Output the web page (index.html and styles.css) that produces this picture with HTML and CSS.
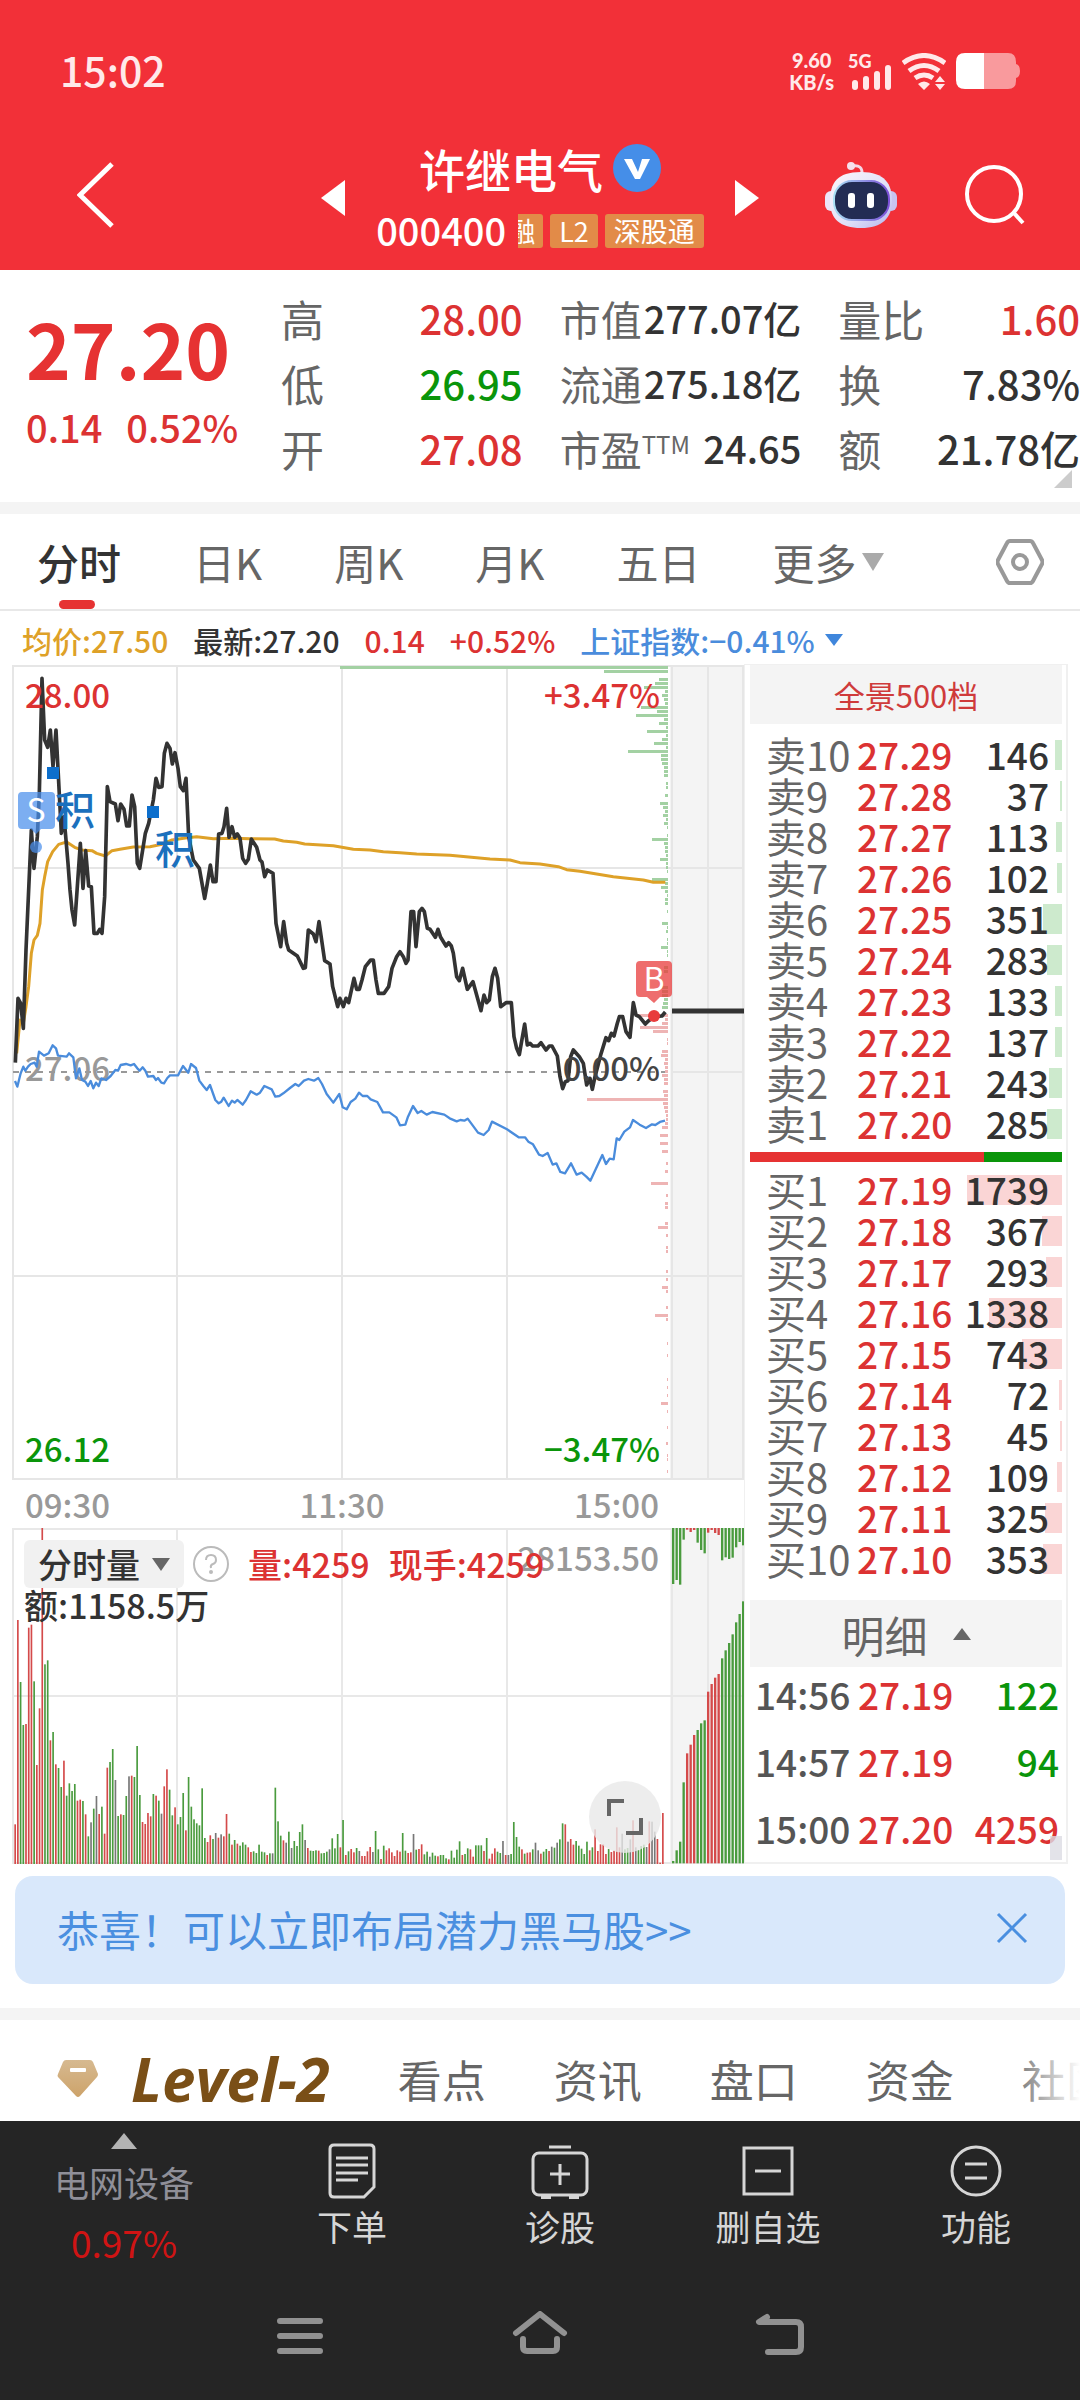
FILE: index.html
```html
<!DOCTYPE html>
<html lang="zh-CN">
<head>
<meta charset="utf-8">
<meta name="viewport" content="width=device-width, initial-scale=1">
<title>许继电气 000400</title>
<link rel="stylesheet" href="styles.css">
</head>
<body>
<header class="header">
  <div class="status">
    <time class="clock">15:02</time>
    <div class="status-icons">
      <span class="speed">9.60<br>KB/s</span>
      <span class="signal"><span class="net">5G</span>
        <svg width="40" height="25" viewBox="0 0 40 25" fill="#ffe9ea"><rect x="0" y="15" width="6" height="10" rx="3"/><rect x="11" y="11" width="6" height="14" rx="3"/><rect x="22" y="6" width="6" height="19" rx="3"/><rect x="33" y="0" width="6" height="25" rx="3"/></svg>
      </span>
      <svg width="44" height="37" viewBox="0 0 44 37"><g fill="none" stroke="#ffe9ea" stroke-width="5"><path d="M1 10Q22-5 43 10"/><path d="M7 18Q22 7 37 18"/><path d="M13 25Q22 19 31 25"/></g><path fill="#ffe9ea" d="M16 31Q22 26 28 31L22 37ZM38 23l5 6H33ZM33 31h10l-5 6Z"/></svg>
      <svg width="64" height="37" viewBox="0 0 64 37"><path fill="#f99a9d" d="M28 0H52Q60 0 60 9V11Q64 12 64 18T60 25V28Q60 36 52 36H28Z"/><path fill="#fff" d="M28 0H9Q0 0 0 9V27Q0 36 9 36H28Z"/></svg>
    </div>
  </div>
  <nav class="titlebar">
    <a class="back" href="#" aria-label="返回"><svg width="37" height="66" viewBox="0 0 37 66"><path d="M35 2L3 33L35 64" fill="none" stroke="#fff" stroke-width="5"/></svg></a>
    <div class="switcher">
      <button class="step" aria-label="上一只"><svg width="24" height="36" viewBox="0 0 24 36"><path d="M24 0V36L0 18Z" fill="#fff"/></svg></button>
      <div class="stock">
        <h1 class="name">许继电气<svg width="48" height="48" viewBox="0 0 48 48"><circle cx="24" cy="24" r="24" fill="#458ee8"/><path d="M11 15H19L25 28L29 15H37L27 35H22Z" fill="#fff"/></svg></h1>
        <div class="code">000400<span class="tags"><i class="tag cut">融</i><i class="tag">L2</i><i class="tag">深股通</i></span></div>
      </div>
      <button class="step" aria-label="下一只"><svg width="24" height="36" viewBox="0 0 24 36"><path d="M0 0V36L24 18Z" fill="#fff"/></svg></button>
    </div>
    <div class="actions">
      <button aria-label="助手"><svg width="72" height="68" viewBox="0 0 72 68">
        <defs><linearGradient id="head" x1="0" y1="0" x2="1" y2="1"><stop offset="0" stop-color="#fdf6fb"/><stop offset=".6" stop-color="#dfe0f8"/><stop offset="1" stop-color="#b4b4ec"/></linearGradient><linearGradient id="rim"><stop offset="0" stop-color="#a9e0f4"/><stop offset="1" stop-color="#7b50d8"/></linearGradient></defs>
        <path d="M27 5Q38 3 37 14" fill="none" stroke="#f4d8e6" stroke-width="3"/><circle cx="26" cy="5" r="4" fill="#f6e0ec"/>
        <rect x="0" y="30" width="12" height="20" rx="6" fill="#ece4f8"/><rect x="60" y="30" width="12" height="20" rx="6" fill="#c8c4f0"/>
        <path d="M36 11C60 11 67 23 67 40S57 67 36 67S5 58 5 40S12 11 36 11Z" fill="url(#head)"/>
        <rect x="9" y="20" width="55" height="39" rx="18" fill="#232c54" stroke="url(#rim)" stroke-width="2"/>
        <rect x="23" y="32" width="7" height="15" rx="3" fill="#fff"/><rect x="42" y="32" width="7" height="15" rx="3" fill="#fff"/></svg></button>
      <button aria-label="搜索"><svg width="60" height="60" viewBox="0 0 60 60" fill="none" stroke="#fff" stroke-width="4"><circle cx="29" cy="29" r="27"/><path d="M48 47L58 58"/></svg></button>
    </div>
  </nav>
</header>

<main>
  <section class="quote">
    <div class="last">
      <strong class="price">27.20</strong>
      <div class="change"><span>0.14</span><span>0.52%</span></div>
    </div>
    <dl class="stats"><div><dt>高</dt><dd class="up">28.00</dd></div><div><dt>低</dt><dd class="down">26.95</dd></div><div><dt>开</dt><dd class="up">27.08</dd></div></dl>
    <dl class="stats mid"><div><dt>市值</dt><dd>277.07亿</dd></div><div><dt>流通</dt><dd>275.18亿</dd></div><div><dt>市盈<sup>TTM</sup></dt><dd>24.65</dd></div></dl>
    <dl class="stats"><div><dt>量比</dt><dd class="up">1.60</dd></div><div><dt>换</dt><dd>7.83%</dd></div><div><dt>额</dt><dd>21.78亿</dd></div></dl>
    <svg class="corner" width="18" height="18" viewBox="0 0 18 18"><path d="M18 0V18H0Z" fill="#ccc"/></svg>
  </section>

  <nav class="periods">
    <a class="active" href="#">分时</a><a href="#">日K</a><a href="#">周K</a><a href="#">月K</a><a href="#">五日</a>
    <a class="more" href="#">更多<svg width="22" height="18" viewBox="0 0 22 18"><path d="M0 0H22L11 18Z" fill="#aaa"/></svg></a>
    <button class="settings" aria-label="设置"><svg width="48" height="46" viewBox="0 0 48 46" fill="none" stroke="#999" stroke-width="4"><path d="M14 2H34Q36 2 37 4L46 21Q47 23 46 25L37 42Q36 44 34 44H14Q12 44 11 42L2 25Q1 23 2 21L11 4Q12 2 14 2Z"/><circle cx="24" cy="23" r="7"/></svg></button>
  </nav>

  <div class="info">
    <span class="avg">均价:27.50</span><span>最新:27.20</span><span class="up">0.14</span><span class="up">+0.52%</span>
    <a class="index" href="#">上证指数:−0.41%<svg width="18" height="12" viewBox="0 0 18 12"><path d="M0 0H18L9 12Z" fill="#3f86dc"/></svg></a>
  </div>

  <div class="market">
    <div class="charts">
      <svg class="plot" viewBox="0 660 744 822" role="img" aria-label="分时走势">
        <rect x="670" y="665" width="74" height="815" fill="#f4f4f4"/>
        <g stroke="#e6e6e6" stroke-width="2" fill="none"><path d="M13 666H744M13 868H744M672 1072H744M13 1276H744M13 1479H744M13 665V1480M177 665V1480M342 665V1480M507 665V1480M672 665V1480M708 665V1480M743 665V1480"/></g>
        <path d="M13 1072H668" stroke="#999" stroke-width="2" stroke-dasharray="6 6"/>
        <g id="depth"></g>
        <text class="t grey" x="25" y="1081">27.06</text>
        <g transform="translate(0 650) scale(.33333)" fill="none" stroke-linejoin="round">
          <polyline stroke="#dea128" stroke-width="9" points="50,1210 60,1110 70,1120 78,1070 86,1010 94,910 102,870 112,856 120,820 127,720 134,680 143,635 158,605 176,583 200,576 224,592 246,600 276,602 290,610 316,618 336,602 360,598 400,591 450,590 486,583 516,570 556,564 590,560 640,566 700,565 750,566 824,567 850,573 890,577 914,582 1000,587 1060,598 1110,600 1150,605 1200,608 1250,612 1350,616 1470,627 1530,630 1560,638 1620,642 1675,650 1700,659 1740,664 1840,680 1930,690 1960,697 1996,697"/>
          <polyline stroke="#4a8cdc" stroke-width="7" points="45,1293 52,1310 62,1270 70,1250 76,1262 84,1250 92,1242 104,1238 110,1250 117,1205 132,1217 146,1210 158,1186 168,1195 174,1217 200,1220 207,1210 220,1222 228,1285 238,1255 246,1290 256,1295 264,1308 272,1293 280,1315 288,1298 296,1308 304,1285 318,1290 332,1278 346,1260 354,1262 362,1245 378,1242 392,1246 402,1242 412,1255 419,1262 428,1252 436,1262 444,1280 460,1278 468,1290 474,1284 484,1298 492,1300 502,1284 510,1276 534,1276 549,1248 565,1268 573,1242 588,1254 598,1292 610,1308 620,1320 630,1305 646,1350 656,1360 664,1355 671,1343 686,1368 696,1352 704,1358 712,1350 728,1364 738,1350 752,1324 770,1334 780,1328 793,1308 815,1318 826,1340 838,1338 850,1330 870,1314 886,1302 896,1308 912,1292 925,1287 942,1292 955,1284 966,1302 980,1332 1000,1358 1018,1332 1028,1372 1040,1378 1052,1356 1066,1346 1077,1328 1088,1338 1102,1338 1112,1348 1132,1356 1149,1387 1168,1387 1189,1402 1200,1426 1216,1424 1224,1400 1239,1368 1253,1389 1264,1383 1280,1394 1297,1386 1333,1394 1349,1405 1370,1414 1381,1410 1393,1412 1403,1406 1418,1426 1434,1448 1451,1455 1466,1440 1476,1415 1521,1438 1556,1462 1575,1462 1585,1475 1599,1483 1617,1514 1628,1518 1643,1509 1658,1544 1669,1540 1681,1566 1695,1570 1713,1540 1730,1574 1745,1568 1759,1580 1771,1592 1786,1560 1807,1515 1818,1542 1829,1526 1841,1528 1850,1465 1858,1470 1873,1445 1890,1432 1899,1410 1919,1424 1938,1434 1956,1423 1966,1425 1980,1416 1995,1412"/>
          <polyline stroke="#333" stroke-width="11" points="46,1238 54,1045 62,1060 70,1135 78,900 94,540 102,655 112,560 118,430 126,85 134,270 143,292 151,240 159,350 168,240 184,550 192,500 204,640 210,720 216,780 224,825 241,580 249,715 257,602 266,708 274,710 282,850 292,850 299,838 306,850 314,740 322,410 330,455 346,462 354,512 362,462 372,478 380,528 388,528 396,435 404,470 412,640 419,655 428,600 436,550 446,520 460,450 468,385 476,412 486,410 493,310 501,280 510,295 517,342 525,308 534,355 541,410 550,422 558,385 566,560 580,630 598,655 614,745 622,700 631,645 639,695 648,695 656,552 666,550 672,530 680,475 687,562 696,530 704,562 712,552 720,565 728,625 737,640 745,628 754,567 770,592 780,630 786,636 794,680 802,660 819,670 828,820 842,890 851,815 860,880 866,900 892,918 910,955 916,953 925,840 940,852 948,875 957,815 974,932 990,942 998,1010 1013,1070 1020,1045 1030,1070 1038,1045 1046,1058 1062,985 1070,1018 1078,1018 1086,990 1096,950 1112,930 1120,930 1128,990 1135,1030 1152,1030 1166,1010 1176,955 1190,920 1200,905 1210,920 1218,940 1224,930 1233,785 1241,785 1248,890 1258,785 1266,775 1273,785 1282,835 1290,838 1306,862 1314,838 1322,862 1338,888 1346,878 1354,888 1360,910 1370,980 1378,992 1388,955 1402,1018 1419,995 1443,1082 1452,1035 1460,1058 1468,1050 1477,980 1485,955 1493,985 1502,1070 1518,1058 1534,1058 1542,1160 1550,1195 1558,1214 1574,1122 1582,1185 1590,1180 1598,1188 1614,1188 1623,1178 1638,1200 1648,1188 1656,1188 1672,1218 1680,1280 1688,1316 1696,1295 1704,1292 1712,1220 1720,1200 1738,1220 1750,1240 1760,1305 1770,1285 1777,1318 1785,1280 1802,1215 1818,1163 1826,1172 1834,1150 1842,1158 1852,1120 1858,1100 1868,1100 1878,1145 1890,1162 1900,1058 1908,1095 1918,1100 1936,1122 1946,1112 1962,1100 1986,1098 1996,1086"/>
        </g>
        <path d="M672 1011H744" stroke="#333" stroke-width="5"/>
        <rect x="47" y="767" width="12" height="12" fill="#0d6fcc"/><rect x="147" y="806" width="12" height="12" fill="#0d6fcc"/>
        <g fill="#4a8fec" fill-opacity=".72"><path d="M22 792H51Q55 792 55 796V825Q55 829 51 829H41L36 834L31 829H22Q18 829 18 825V796Q18 792 22 792Z"/><circle cx="36" cy="847" r="6"/></g>
        <g fill="#e83c3c"><path fill-opacity=".75" d="M640 961H668Q672 961 672 965V993Q672 997 668 997H660L654 1003L647 997H640Q636 997 636 993V965Q636 961 640 961Z"/><circle cx="654" cy="1016" r="6"/></g>
        <text class="mark" x="36" y="822">S</text><text class="mark" x="654" y="991">B</text>
        <text class="note" x="55" y="825">积</text><text class="note" x="155" y="864">积</text>
        <text class="t red" x="25" y="708">28.00</text><text class="t red end" x="660" y="708">+3.47%</text>
        <text class="t dark end" x="660" y="1081">0.00%</text>
        <text class="t green" x="25" y="1462">26.12</text><text class="t green end" x="660" y="1462">−3.47%</text>
      </svg>
      <div class="times"><span>09:30</span><span>11:30</span><span>15:00</span></div>
      <div class="volume">
        <svg class="plot" viewBox="0 1526 744 340" role="img" aria-label="成交量">
          <rect x="670" y="1528" width="74" height="336" fill="#f4f4f4"/>
          <path stroke="#e8e8e8" stroke-width="2" d="M13 1529H744M13 1696H744M13 1863H744M13 1528V1864M177 1528V1864M342 1528V1864M507 1528V1864M672 1528V1864M708 1528V1864M743 1528V1864"/>
          <g id="bars" transform="translate(0 1510) scale(.33333)"></g>
          <text class="t grey end" x="659" y="1571">28153.50</text>
        </svg>
        <div class="legend">
          <button class="indicator">分时量<svg width="18" height="13" viewBox="0 0 18 13"><path d="M0 0H18L9 13Z" fill="#666"/></svg></button>
          <svg width="36" height="36" viewBox="0 0 36 36"><circle cx="18" cy="18" r="17" fill="none" stroke="#bbb" stroke-width="2"/><path d="M13 14Q13 9 18 9T23 14Q23 17 20 18T18 22" fill="none" stroke="#bbb" stroke-width="2"/><circle cx="18" cy="26" r="2" fill="#bbb"/></svg>
          <span class="up">量:4259</span><span class="up">现手:4259</span>
          <span class="amount">额:1158.5万</span>
        </div>
        <button class="expand" aria-label="全屏"><svg width="38" height="38" viewBox="0 0 38 38" fill="none" stroke="#666" stroke-width="4"><path d="M3 18V3H18M35 20V35H20"/></svg></button>
      </div>
    </div>

    <aside class="side">
      <button class="depth-all">全景500档</button>
      <table class="book sell"><tbody id="sell"></tbody></table>
      <div class="ratio"><i></i></div>
      <table class="book buy"><tbody id="buy"></tbody></table>
      <button class="detail">明细<svg width="18" height="12" viewBox="0 0 18 12"><path d="M0 12H18L9 0Z" fill="#666"/></svg></button>
      <table class="ticks"><tbody>
        <tr><td>14:56</td><td class="up">27.19</td><td class="down">122</td></tr>
        <tr><td>14:57</td><td class="up">27.19</td><td class="down">94</td></tr>
        <tr><td>15:00</td><td class="up">27.20</td><td class="up">4259</td></tr>
      </tbody></table>
      <i class="thumb"></i>
    </aside>
  </div>

  <div class="banner">
    <a href="#">恭喜！可以立即布局潜力黑马股&gt;&gt;</a>
    <button aria-label="关闭"><svg width="32" height="32" viewBox="0 0 32 32"><path d="M2 2L30 30M30 2L2 30" stroke="#4a8fe0" stroke-width="3"/></svg></button>
  </div>

  <nav class="sections">
    <svg class="gem" width="42" height="40" viewBox="0 0 42 40"><defs><linearGradient id="gold" x1="0" y1="0" x2="0" y2="1"><stop offset="0" stop-color="#d6b990"/><stop offset="1" stop-color="#cda36a"/></linearGradient></defs><path d="M9 1H33Q35 1 36 3L41 15Q41 17 40 18L23 37Q21 39 19 37L1 18Q0 17 1 15L6 3Q7 1 9 1Z" fill="url(#gold)"/><rect x="13" y="9" width="16" height="4" rx="1" fill="#fff"/></svg>
    <a class="level" href="#">Level-2</a>
    <a href="#">看点</a><a href="#">资讯</a><a href="#">盘口</a><a href="#">资金</a><a href="#">社区</a>
  </nav>
</main>

<footer class="footer">
  <nav class="toolbar">
    <a class="sector" href="#"><svg width="26" height="16" viewBox="0 0 26 16"><path d="M13 0L26 16H0Z" fill="#b4b4b4"/></svg><span>电网设备</span><b>0.97%</b></a>
    <a href="#"><svg width="60" height="60" viewBox="0 0 60 60" fill="none" stroke="#d6d6d6" stroke-width="3"><path d="M12 4H48Q52 4 52 8V46L42 56H12Q8 56 8 52V8Q8 4 12 4ZM14 17H46M14 24H46M14 32H46M14 39H36"/></svg>下单</a>
    <a href="#"><svg width="60" height="60" viewBox="0 0 60 60" fill="none" stroke="#d6d6d6" stroke-width="3"><rect x="3" y="12" width="54" height="42" rx="6"/><path d="M19 6H41M30 23V44M20 33H40"/><path d="M11 56H21M39 56H49" stroke-width="4"/></svg>诊股</a>
    <a href="#"><svg width="60" height="60" viewBox="0 0 60 60" fill="none" stroke="#d6d6d6" stroke-width="3"><rect x="6" y="7" width="48" height="46"/><path d="M17 30H43"/></svg>删自选</a>
    <a href="#"><svg width="60" height="60" viewBox="0 0 60 60" fill="none" stroke="#d6d6d6" stroke-width="3"><circle cx="30" cy="30" r="24"/><path d="M19 23H41M19 37H41"/></svg>功能</a>
  </nav>
  <div class="sysnav">
    <button aria-label="最近任务"><svg width="60" height="48" viewBox="0 0 60 48" stroke="#919191" stroke-width="6" stroke-linecap="round"><path d="M10 10H50M10 25H50M10 40H50"/></svg></button>
    <button aria-label="主页"><svg width="60" height="48" viewBox="0 0 60 48" fill="none" stroke="#919191" stroke-width="6" stroke-linecap="round" stroke-linejoin="round"><path d="M6 22L30 3L54 22M13 28V36Q13 40 17 40H43Q47 40 47 36V28"/></svg></button>
    <button aria-label="返回"><svg width="60" height="48" viewBox="0 0 60 48" fill="none" stroke="#919191" stroke-width="6" stroke-linecap="round" stroke-linejoin="round"><path d="M17 6L9 11H46Q51 11 51 16V36Q51 41 46 41H18"/></svg></button>
  </div>
</footer>
<script src="app.js"></script>
</body>
</html>
```
FILE: styles.css
```css
* { box-sizing: border-box; }
body { margin: 0; background: #fff; color: #333; font-family: "Noto Sans CJK SC", "Noto Sans", sans-serif; font-size: 34px; font-weight: 400; }
a { color: inherit; text-decoration: none; }
button { margin: 0; padding: 0; border: 0; background: none; font: inherit; color: inherit; display: flex; align-items: center; justify-content: center; }
svg { display: block; flex: none; }
dl, dd, h1 { margin: 0; }
.up { color: #dc3232; }
.down { color: #0a950a; }

.header { background: #f23038; color: #fff; }
.status { height: 120px; padding: 22px 60px 0; display: flex; justify-content: space-between; align-items: center; }
.clock { padding-bottom: 5px; font-size: 41px; font-weight: 500; color: #ffe9ea; }
.status-icons { display: flex; align-items: center; gap: 10px; color: #ffe9ea; font-family: Lato, sans-serif; font-weight: 900; }
.speed { font-size: 20px; line-height: 22px; text-align: center; margin-right: 4px; }
.signal { display: flex; flex-direction: column; }
.signal svg { margin: -5px 0 0 4px; }
.net { font-size: 18px; line-height: 18px; }
.titlebar { height: 150px; display: grid; grid-template-columns: 1fr auto 1fr; align-items: center; padding: 0 55px 0 77px; }
.switcher { display: flex; align-items: center; gap: 31px; margin-left: -22px; padding-top: 6px; }
.stock { display: flex; flex-direction: column; align-items: center; }
.name { display: flex; align-items: center; gap: 10px; font-size: 46px; line-height: 64px; font-weight: 500; }
.code { display: flex; align-items: center; gap: 12px; font-size: 38px; line-height: 60px; font-weight: 500; }
.tags { display: flex; gap: 7px; padding-top: 2px; }
.tag { background: #e28b48; border-radius: 3px; font-style: normal; font-weight: 400; font-size: 27px; line-height: 34px; padding: 0 9px; height: 34px; }
.tag.cut { width: 25px; padding: 0 8px 0 0; overflow: hidden; direction: rtl; border-radius: 0 3px 3px 0; }
.actions { display: flex; justify-content: flex-end; align-items: center; gap: 68px; }

.quote { position: relative; display: grid; grid-template-columns: 218px 1fr 1fr 1fr; gap: 37px; padding: 15px 0 22px 26px; border-bottom: 12px solid #f4f4f4; white-space: nowrap; }
.price { display: block; font-size: 76px; line-height: 100px; font-weight: 700; color: #e63232; padding-top: 12px; }
.change { display: flex; gap: 24px; font-size: 38px; line-height: 60px; font-weight: 500; color: #dc3232; }
.stats > div { display: flex; justify-content: space-between; align-items: center; height: 65px; }
.stats dt { font-size: 43px; line-height: 64px; color: #666; }
.stats dd { font-size: 40px; line-height: 64px; font-weight: 500; }
.stats.mid dt { font-size: 41px; }
.stats.mid dd { font-size: 38px; }
.stats sup { font-size: 24px; line-height: 24px; vertical-align: 12px; }
.corner { position: absolute; right: 8px; bottom: 14px; }

.periods { display: flex; align-items: center; gap: 72px; height: 97px; padding: 0 36px 0 37px; border-bottom: 2px solid #e8e8e8; font-size: 42px; line-height: 95px; color: #666; }
.periods a { position: relative; white-space: nowrap; }
.periods .active { color: #333; font-weight: 500; }
.active::after { content: ""; position: absolute; left: 50%; bottom: 0; width: 36px; height: 9px; margin-left: -20px; border-radius: 5px; background: #e63232; }
.periods .more { display: flex; align-items: center; gap: 6px; }
.settings { margin-left: auto; }

.info { display: flex; align-items: center; gap: 25px; height: 49px; padding: 8px 22px 0; font-size: 30px; line-height: 40px; font-weight: 500; white-space: nowrap; }
.avg { color: #dea128; }
.index { display: flex; align-items: center; gap: 10px; color: #4a8cdc; }

.market { display: grid; grid-template-columns: minmax(0, 31fr) minmax(0, 14fr); }
.side { position: relative; margin: 4px 12px 2px 0; border: 2px solid #f0f0f0; border-left-width: 1px; border-top-width: 1px; padding: 0 4px 0 5px; }
.plot { width: 100%; height: auto; }
.t { font-size: 33px; font-weight: 500; }
.end { text-anchor: end; }
.red { fill: #dc3232; }
.green { fill: #0a950a; }
.grey { fill: #999; }
.dark { fill: #444; }
.mark { font-size: 32px; fill: #fff; text-anchor: middle; }
.note { font-size: 40px; font-weight: 500; fill: #1b70bd; }
.times { display: flex; justify-content: space-between; height: 44px; padding: 0 85px 0 25px; font-size: 33px; line-height: 44px; font-weight: 500; color: #999; }
.volume { position: relative; }
.legend { position: absolute; left: 24px; top: 14px; display: grid; grid-template-columns: repeat(4, auto); column-gap: 9px; align-items: center; font-size: 34px; font-weight: 500; line-height: 48px; white-space: nowrap; }
.legend .up { margin-left: 10px; }
.indicator { gap: 12px; height: 48px; padding: 0 14px 0 14px; border-radius: 6px; background: #f1f1f1; }
.amount { grid-column: 1 / -1; line-height: 34px; }
.expand { position: absolute; left: 589px; bottom: 13px; width: 72px; height: 72px; border-radius: 50%; background: rgba(232, 232, 232, .8); }

.depth-all { width: 100%; height: 59px; background: #f4f4f4; color: #cf3b3b; font-size: 31px; }
.book, .ticks { width: 100%; border-collapse: collapse; table-layout: fixed; white-space: nowrap; }
.book td, .ticks td { padding: 0; }
.book tr { height: 41px; }
.book td { position: relative; line-height: 41px; font-size: 37px; font-weight: 500; }
.book td:first-child { width: 107px; padding-left: 16px; font-size: 40px; font-weight: 400; color: #666; }
.book td:nth-child(2) { width: 92px; }
.book td:last-child { text-align: right; padding-right: 13px; }
.sell { margin-top: 10px; }
.buy { margin-top: 7px; }
.bar { position: absolute; right: 0; top: 6px; height: 30px; }
.sell .bar { background: #cdeacd; }
.buy .bar { background: #fad5d5; }
.qty { position: relative; }
.ratio { height: 10px; margin-top: 8px; background: #0a950a; }
.ratio i { display: block; width: 75%; height: 10px; background: #e63232; }
.detail { width: 100%; height: 67px; margin: 21px 0 -6px; background: #f4f4f4; color: #666; font-size: 43px; gap: 25px; }
.ticks tr { height: 67px; }
.ticks td { font-size: 37px; line-height: 67px; font-weight: 500; }
.ticks td:first-child { width: 108px; padding-left: 5px; color: #555; }
.ticks td:nth-child(2) { width: 94px; }
.ticks td:last-child { text-align: right; padding-right: 3px; }
.thumb { position: absolute; right: 4px; bottom: 2px; width: 12px; height: 24px; background: #dcdce4; opacity: .8; }

.banner { display: flex; justify-content: space-between; align-items: center; height: 108px; margin: 10px 15px 24px; padding: 0 37px 4px 42px; border-radius: 18px; background: #d9e8fb; color: #4a8fe0; font-size: 42px; }
.sections { position: relative; display: flex; align-items: center; gap: 68px; height: 113px; padding: 16px 0 0 57px; border-top: 12px solid #f4f4f4; overflow: hidden; white-space: nowrap; font-size: 44px; line-height: 80px; color: #666; }
.sections::after { content: ""; position: absolute; right: 0; top: 0; bottom: 0; width: 72px; background: linear-gradient(90deg, rgba(255, 255, 255, 0), #fff); }
.gem { margin-right: -36px; }
.level { font-family: "Open Sans", sans-serif; font-size: 60px; font-weight: 700; font-style: italic; color: #7a4f17; }

.footer { background: #252525; color: #d6d6d6; }
.toolbar { display: grid; grid-template-columns: 248fr repeat(4, 208fr); height: 159px; font-size: 35px; }
.toolbar a { display: flex; flex-direction: column; align-items: center; padding-top: 20px; line-height: 50px; }
.toolbar .sector { padding-top: 12px; color: #8f8f98; line-height: 60px; }
.sector span { padding-top: 3px; }
.sector b { font-size: 37px; font-weight: 400; color: #d01414; }
.sysnav { display: flex; justify-content: center; gap: 180px; height: 120px; padding-top: 31px; align-items: flex-start; }
```
FILE: app.js
```js
const rows = {
  sell: [[10, '27.29', 146, 7], [9, '27.28', 37, 2], [8, '27.27', 113, 6], [7, '27.26', 102, 5], [6, '27.25', 351, 19], [5, '27.24', 283, 15], [4, '27.23', 133, 7], [3, '27.22', 137, 7], [2, '27.21', 243, 13], [1, '27.20', 285, 15]],
  buy: [[1, '27.19', 1739, 95], [2, '27.18', 367, 20], [3, '27.17', 293, 16], [4, '27.16', 1338, 73], [5, '27.15', 743, 40], [6, '27.14', 72, 3], [7, '27.13', 45, 2], [8, '27.12', 109, 5], [9, '27.11', 325, 17], [10, '27.10', 353, 19]]
};
for (const side of ['sell', 'buy']) {
  document.getElementById(side).innerHTML = rows[side].map(([n, price, qty, w]) =>
    `<tr><td>${side === 'sell' ? '卖' : '买'}${n}</td><td class="up">${price}</td><td><i class="bar" style="width:${w}px"></i><span class="qty">${qty}</span></td></tr>`).join('');
}

const colour = { r: '#d44a4a', g: '#4a9b3e', k: '#777' };

// One entry per minute: top of the bar and its colour.
const minutes = `943r 330r 516g 645g 642r 353r 344r 514g 765r 595r 54r 463g 451g 691r 666g 763r 774g 831g 752r 857g 820g 843g 822g 872r 869r 873g 913r 979g 937k 896g 858k 912r 890g 971r 773r 756g 717g 810k 918g 913r 915g 858g 799k 797r 801g 708g 855g 936r 942r 909r 919r 852g 857r 872g 911k 829r 778r 839g 916g 892r 943g 921g 849g 961r 801g 890g 928g 940g 946g 835g 984g 996r 976r 987g 969k 983r 973k 979r 912r 971g 1004r 990g 1001r 1007g 997g 1004g 1012r 1026r 1024g 1029g 1004g 1025g 1027g 1035r 1030g 1030k 833g 934g 977g 991r 998k 965g 1014k 993g 1008g 966g 943g 990k 1014r 1022g 1023g 1021g 1022r 1030g 1029g 1025g 1018k 985g 1015g 972g 1012r 930g 1035r 1024g 1017r 1027r 1014g 1023k 1038r 1038r 1024r 1011r 1026k 963g 1018g 1047r 1007g 1021r 1015r 1027r 1038r 1021r 1025r 969g 1022g 1029r 1027r 972k 1019g 1017r 1003r 1033g 1025g 1040k 1028g 1037g 1039r 1035g 1035g 1045g 1048r 1022g 1043g 1019g 994g 1035r 1032g 1015g 1018r 1040r 1006g 1006g 1006g 1023r 984g 1046r 1031r 1015r 1025g 1029g 993k 1035r 1035k 1032g 936g 981g 1010g 1018r 1031g 1028r 1027r 1018g 998k 1021k 1031r 1025g 1017g 1023r 1010k 1013g 998k 988g 940g 943r 995k 987r 1004r 993g 1007g 1016g 1032g 995g 1021r 1012g 958r 1023r 1003r 1003r 1032r 1017g 1026r 1022r 952r 1012r 971k 1018g 1014g 988k 931r 1012k 1020g 1008g 1004g 1011k 934r 935k 965k 987r 1058r 909r`.split(' ');
const bar = (x, top, bottom, w, c) => `<rect x="${x.toFixed(1)}" y="${top}" width="${w}" height="${bottom - top}" fill="${colour[c]}"/>`;
let bars = minutes.map((m, i) => bar(43 + i * 8.13, parseInt(m), 1062, 5, m.slice(-1))).join('');

// Closing auction: matched volume from the bottom, unmatched from the top.
const matched = '1053g 1021g 995g 817g 730r 704r 675r 660g 640g 631g 545r 522r 503r 492r 445g 421g 399g 373g 337g 312g 274g'.split(' ');
const unmatched = '222g 210g 224g 89g 59r 66r 60r 98g 120g 130g 68r 60r 69r 75r 151g 142g 147g 143g 112g 96g 106g'.split(' ');
matched.forEach((m, i) => { bars += bar(2016 + i * 10.5, parseInt(m), 1060, 7, m.slice(-1)); });
unmatched.forEach((m, i) => { bars += bar(2016 + i * 10.5, 54, parseInt(m), 7, m.slice(-1)); });
document.getElementById('bars').innerHTML = bars;

// Turnover by price: [row, bar length].
const green = '0:328 1:64 3:9 4:13 5:24 6:3 7:6 8:4 9:3 10:27 11:11 12:32 13:4 14:9 15:2 16:21 17:2 18:6 19:14 20:2 21:40 22:7 23:7 24:6 25:4 26:4 27:4 29:2 30:2 32:3 34:8 35:5 36:3 37:5 38:2 39:4 40:1 42:1 43:16 44:4 45:3 46:3 47:2 48:8 49:2 50:2 51:1 53:16 54:3 55:7 56:3 57:1 58:3 59:3 61:1 64:6 65:1 66:2 68:1 69:1 70:7 71:1 72:1 75:4 76:4 80:6 81:6 82:6 83:4 84:5 85:6'.split(' ');
const red = '87:30 88:3 89:6 90:28 91:15 93:1 94:1 96:6 97:7 98:3 99:4 100:3 101:3 102:6 103:4 104:4 106:5 107:4 108:81 109:5 110:4 111:3 112:2 113:2 114:3 115:6 117:8 119:8 121:6 124:2 126:3 129:17 132:2 134:3 135:3 139:3 140:10 142:2 145:2 146:2 151:2 153:2 155:6 156:2 160:2 162:13 163:2 169:1 172:1 178:1 180:1 182:1 184:7 186:1 190:1 194:2 197:1 198:1 201:1'.split(' ');
const depth = (list, fill) => list.map(d => { const [row, w] = d.split(':').map(Number); return `<rect x="${668 - w}" y="${666 + row * 4}" width="${w}" height="3" fill="${fill}"/>`; }).join('');
document.getElementById('depth').innerHTML = depth(green, '#a3d1a3') + depth(red, '#eeb4b4');
```
